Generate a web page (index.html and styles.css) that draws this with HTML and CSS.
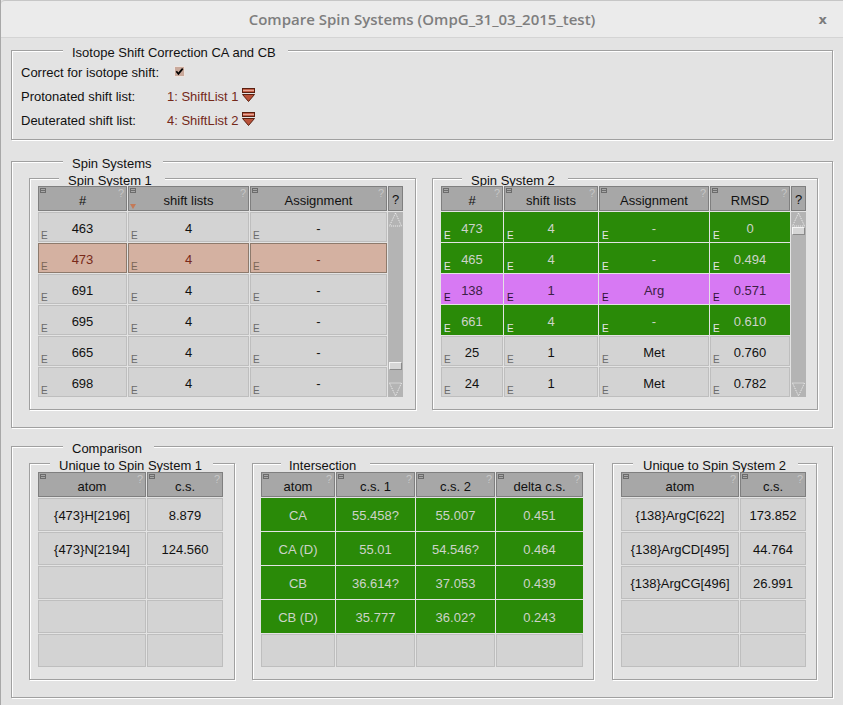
FILE: index.html
```html
<!DOCTYPE html>
<html>
<head>
<meta charset="utf-8">
<link rel="stylesheet" href="styles.css">
</head>
<body>
<div class="window">
  <div class="titlebar">
    <span class="title">Compare Spin Systems (OmpG_31_03_2015_test)</span>
    <span class="close">x</span>
  </div>
  <div class="content">
    <div class="frame f-iso">
      <div class="legend lg-outer lg-tall">Isotope Shift Correction CA and CB</div>
      <div class="iso-grid">
        <span>Correct for isotope shift:</span>
        <span class="chk"><svg width="11" height="11" viewBox="0 0 11 11"><rect x="0.5" y="0.5" width="10" height="10" fill="#c9a99b" stroke="#ece4e0"/><path d="M2.3 5.3 L4.4 7.8 L8.7 2.6" fill="none" stroke="#000" stroke-width="1.7"/></svg></span>
        <span>Protonated shift list:</span>
        <span class="val">1: ShiftList 1<svg class="mb" width="13" height="14" viewBox="0 0 13 14"><rect x="0.5" y="0.5" width="12" height="4" fill="#c2604a" stroke="#5a2010"/><line x1="1" y1="2.5" x2="12" y2="2.5" stroke="#e8a898"/><polygon points="0.5,6.5 12.5,6.5 6.5,13.5" fill="#b9523a" stroke="#5a2010"/></svg></span>
        <span>Deuterated shift list:</span>
        <span class="val">4: ShiftList 2<svg class="mb" width="13" height="14" viewBox="0 0 13 14"><rect x="0.5" y="0.5" width="12" height="4" fill="#c2604a" stroke="#5a2010"/><line x1="1" y1="2.5" x2="12" y2="2.5" stroke="#e8a898"/><polygon points="0.5,6.5 12.5,6.5 6.5,13.5" fill="#b9523a" stroke="#5a2010"/></svg></span>
      </div>
    </div>

    <div class="frame f-spin">
      <div class="legend lg-outer">Spin Systems</div>
      <div class="ss-row">
        <div class="frame ss ss1">
          <div class="legend lg-ss">Spin System 1</div>
          <div class="tbl t-ss1">
            <div class="hd">#<i class="hi"></i><b class="hq">?</b></div>
            <div class="hd">shift lists<i class="hi"></i><b class="hq">?</b><i class="sort"></i></div>
            <div class="hd">Assignment<i class="hi"></i><b class="hq">?</b></div>
            <div class="hd hd-q">?</div>

            <div class="c">463<i class="e">E</i></div><div class="c">4<i class="e">E</i></div><div class="c">-<i class="e">E</i></div>
            <div class="c sel">473<i class="e">E</i></div><div class="c sel">4<i class="e">E</i></div><div class="c sel">-<i class="e">E</i></div>
            <div class="c">691<i class="e">E</i></div><div class="c">4<i class="e">E</i></div><div class="c">-<i class="e">E</i></div>
            <div class="c">695<i class="e">E</i></div><div class="c">4<i class="e">E</i></div><div class="c">-<i class="e">E</i></div>
            <div class="c">665<i class="e">E</i></div><div class="c">4<i class="e">E</i></div><div class="c">-<i class="e">E</i></div>
            <div class="c">698<i class="e">E</i></div><div class="c">4<i class="e">E</i></div><div class="c">-<i class="e">E</i></div>

            <div class="sb">
              <svg class="arr" width="15" height="15" viewBox="0 0 15 15"><polygon points="7.5,1 1.5,14 13.5,14" fill="none" stroke="#f2f2f2" stroke-dasharray="1 1"/></svg>
              <div class="sp"></div>
              <div class="slider sl-bottom"></div>
              <svg class="arr" width="15" height="15" viewBox="0 0 15 15"><polygon points="1.5,1 13.5,1 7.5,14" fill="none" stroke="#f2f2f2" stroke-dasharray="1 1"/></svg>
            </div>
          </div>
        </div>

        <div class="frame ss ss2">
          <div class="legend lg-ss">Spin System 2</div>
          <div class="tbl t-ss2">
            <div class="hd">#<i class="hi"></i><b class="hq">?</b></div>
            <div class="hd">shift lists<i class="hi"></i><b class="hq">?</b></div>
            <div class="hd">Assignment<i class="hi"></i><b class="hq">?</b></div>
            <div class="hd">RMSD<i class="hi"></i><b class="hq">?</b></div>
            <div class="hd hd-q">?</div>

            <div class="c grn">473<i class="e">E</i></div><div class="c grn">4<i class="e">E</i></div><div class="c grn">-<i class="e">E</i></div><div class="c grn">0<i class="e">E</i></div>
            <div class="c grn">465<i class="e">E</i></div><div class="c grn">4<i class="e">E</i></div><div class="c grn">-<i class="e">E</i></div><div class="c grn">0.494<i class="e">E</i></div>
            <div class="c pnk">138<i class="e">E</i></div><div class="c pnk">1<i class="e">E</i></div><div class="c pnk">Arg<i class="e">E</i></div><div class="c pnk">0.571<i class="e">E</i></div>
            <div class="c grn">661<i class="e">E</i></div><div class="c grn">4<i class="e">E</i></div><div class="c grn">-<i class="e">E</i></div><div class="c grn">0.610<i class="e">E</i></div>
            <div class="c">25<i class="e">E</i></div><div class="c">1<i class="e">E</i></div><div class="c">Met<i class="e">E</i></div><div class="c">0.760<i class="e">E</i></div>
            <div class="c">24<i class="e">E</i></div><div class="c">1<i class="e">E</i></div><div class="c">Met<i class="e">E</i></div><div class="c">0.782<i class="e">E</i></div>

            <div class="sb">
              <svg class="arr" width="15" height="15" viewBox="0 0 15 15"><polygon points="7.5,1 1.5,14 13.5,14" fill="none" stroke="#f2f2f2" stroke-dasharray="1 1"/></svg>
              <div class="slider"></div>
              <div class="sp"></div>
              <svg class="arr" width="15" height="15" viewBox="0 0 15 15"><polygon points="1.5,1 13.5,1 7.5,14" fill="none" stroke="#f2f2f2" stroke-dasharray="1 1"/></svg>
            </div>
          </div>
        </div>
      </div>
    </div>

    <div class="frame f-comp">
      <div class="legend lg-outer">Comparison</div>
      <div class="cmp-row">
        <div class="frame sub u1">
          <div class="legend lg-u">Unique to Spin System 1</div>
          <div class="tbl t-u1">
            <div class="hd">atom<i class="hi"></i><b class="hq">?</b></div>
            <div class="hd">c.s.<i class="hi"></i><b class="hq">?</b></div>
            <div class="c">{473}H[2196]</div><div class="c">8.879</div>
            <div class="c">{473}N[2194]</div><div class="c">124.560</div>
            <div class="c"></div><div class="c"></div>
            <div class="c"></div><div class="c"></div>
            <div class="c"></div><div class="c"></div>
          </div>
        </div>

        <div class="frame sub inter">
          <div class="legend lg-i">Intersection</div>
          <div class="tbl t-int">
            <div class="hd">atom<i class="hi"></i><b class="hq">?</b></div>
            <div class="hd">c.s. 1<i class="hi"></i><b class="hq">?</b></div>
            <div class="hd">c.s. 2<i class="hi"></i><b class="hq">?</b></div>
            <div class="hd">delta c.s.<i class="hi"></i><b class="hq">?</b></div>
            <div class="c grn">CA</div><div class="c grn">55.458?</div><div class="c grn">55.007</div><div class="c grn">0.451</div>
            <div class="c grn">CA (D)</div><div class="c grn">55.01</div><div class="c grn">54.546?</div><div class="c grn">0.464</div>
            <div class="c grn">CB</div><div class="c grn">36.614?</div><div class="c grn">37.053</div><div class="c grn">0.439</div>
            <div class="c grn">CB (D)</div><div class="c grn">35.777</div><div class="c grn">36.02?</div><div class="c grn">0.243</div>
            <div class="c"></div><div class="c"></div><div class="c"></div><div class="c"></div>
          </div>
        </div>

        <div class="frame sub u2">
          <div class="legend lg-u2">Unique to Spin System 2</div>
          <div class="tbl t-u2">
            <div class="hd">atom<i class="hi"></i><b class="hq">?</b></div>
            <div class="hd">c.s.<i class="hi"></i><b class="hq">?</b></div>
            <div class="c">{138}ArgC[622]</div><div class="c">173.852</div>
            <div class="c">{138}ArgCD[495]</div><div class="c">44.764</div>
            <div class="c">{138}ArgCG[496]</div><div class="c">26.991</div>
            <div class="c"></div><div class="c"></div>
            <div class="c"></div><div class="c"></div>
          </div>
        </div>
      </div>
    </div>
  </div>
</div>
</body>
</html>
```
FILE: styles.css
```css
html, body {
  margin: 0;
  padding: 0;
}
body {
  background: #e3e3e3;
  font-family: "Liberation Sans", Arial, Helvetica, sans-serif;
  font-size: 13px;
  color: #111;
}
.window {
  width: 843px;
  height: 705px;
  box-sizing: border-box;
  border-left: 1px solid #a8a8a8;
  overflow: hidden;
}
.titlebar {
  height: 38px;
  box-sizing: border-box;
  background: #ebebeb;
  border-top: 1px solid #c6c6c6;
  border-bottom: 1px solid #d4d4d4;
  border-top-left-radius: 4px;
  display: grid;
  grid-template-columns: 1fr auto 1fr;
  align-items: center;
}
.title {
  grid-column: 2;
  font-family: "Open Sans", "DejaVu Sans", sans-serif;
  font-weight: 600;
  font-size: 15px;
  color: #7e7e7e;
}
.close {
  grid-column: 3;
  justify-self: end;
  margin-right: 16px;
  font-family: "DejaVu Sans", sans-serif;
  font-weight: bold;
  font-size: 13px;
  color: #7c7c7c;
}
.content {
  padding: 12px 0 0 10px;
}

/* etched frames */
.frame {
  box-sizing: border-box;
  border: 1px solid #a0a0a0;
  box-shadow: inset 1px 1px 0 #fff, 1px 1px 0 #fff;
}
.legend {
  width: fit-content;
  height: 12px;
  line-height: 14px;
  margin-top: -5px;
  background: #e3e3e3;
  white-space: nowrap;
  padding: 0 12px 0 9px;
}
.lg-tall { height: 14px; }
.f-iso .lg-outer { margin-left: 42px; }
.f-spin .lg-outer, .f-comp .lg-outer { margin-left: 34px; }
.lg-ss { margin-left: 21px; padding-right: 13px; }
.lg-u { margin-left: 12px; padding-right: 11px; }
.lg-u2 { margin-left: 12px; padding: 0 12px 0 10px; }
.lg-i { margin-left: 20px; padding: 0 14px 0 8px; }

.f-iso {
  width: 822px;
  height: 90px;
  padding-left: 9px;
}
.iso-grid {
  display: grid;
  grid-template-columns: 146px auto;
  grid-auto-rows: 24px;
  align-items: center;
}
.chk {
  margin-left: 7px;
  height: 11px;
  display: flex;
  margin-top: -1px;
}
.val {
  color: #74291a;
  display: flex;
  align-items: center;
}
.mb { margin-left: 3px; margin-top: -2px; }

.f-spin {
  width: 822px;
  height: 267px;
  margin-top: 21px;
  padding-left: 17px;
}
.ss-row {
  display: flex;
  gap: 16px;
  margin-top: 9px;
}
.ss {
  height: 232px;
  padding-left: 8px;
}
.ss1 { width: 387px; }
.ss2 { width: 386px; }

.f-comp {
  width: 822px;
  height: 252px;
  margin-top: 18px;
  padding-left: 17px;
}
.cmp-row {
  display: flex;
  margin-top: 9px;
}
.sub {
  height: 217px;
  padding-left: 8px;
}
.sub .tbl { margin-top: 1px; }
.u1 { width: 206px; }
.inter { width: 342px; margin-left: 17px; }
.u2 { width: 205px; margin-left: 18px; }

/* tables */
.tbl {
  display: grid;
  gap: 1px;
}
.t-ss1 {
  grid-template-columns: 89px 121px 137px 15px;
  grid-template-rows: 25px repeat(6, 30px);
}
.t-ss2 {
  grid-template-columns: 62px 94px 110px 80px 15px;
  grid-template-rows: 25px repeat(6, 30px);
}
.t-u1 {
  grid-template-columns: 108px 76px;
  grid-template-rows: 25px repeat(5, 33px);
}
.t-int {
  grid-template-columns: 74px 79px 79px 87px;
  grid-template-rows: 25px repeat(5, 33px);
}
.t-u2 {
  grid-template-columns: 118px 66px;
  grid-template-rows: 25px repeat(5, 33px);
}
.hd {
  position: relative;
  box-sizing: border-box;
  background: #a7a7a7;
  border: 1px solid #7f7f7f;
  display: flex;
  align-items: center;
  justify-content: center;
  padding-top: 3px;
  white-space: nowrap;
}
.hd-q { padding-top: 2px; }
.hi {
  position: absolute;
  left: 1px;
  top: 1px;
  border: 1px solid #6c6c6c;
  box-sizing: border-box;
  background: linear-gradient(#6c6c6c, #6c6c6c) center / 100% 1px no-repeat;
  width: 6px;
  height: 5px;
}
.hq {
  position: absolute;
  right: 2px;
  top: 0;
  font-weight: normal;
  font-size: 11px;
  line-height: 12px;
  color: #c6c6c6;
}
.sort {
  position: absolute;
  left: 1px;
  bottom: 1px;
  width: 0;
  height: 0;
  border-left: 3px solid transparent;
  border-right: 3px solid transparent;
  border-top: 5px solid #c47a58;
}
.c {
  position: relative;
  box-sizing: border-box;
  background: #d3d3d3;
  border: 1px solid #bebebe;
  display: flex;
  align-items: center;
  justify-content: center;
  padding-top: 2px;
  white-space: nowrap;
}
.e {
  position: absolute;
  left: 2px;
  bottom: 0;
  font-style: normal;
  font-size: 10px;
  line-height: 10px;
  color: #6a6a6a;
}
.sel {
  background: #d4b1a1;
  border-color: #8d7a6c;
  color: #78291a;
}
.sel .e { color: #7a6656; }
.grn {
  background: #2a8a08;
  border-color: #2a8a08;
  color: #cdd3c9;
}
.grn .e { color: #e6e6e6; }
.pnk {
  background: #d779f3;
  border-color: #d779f3;
  color: #3c2145;
}
.pnk .e { color: #2a0f30; }

/* scrollbar */
.sb {
  grid-column: -2;
  grid-row: 2 / span 6;
  background: #b4b4b4;
  display: flex;
  flex-direction: column;
}
.arr { display: block; flex: none; }
.sp { flex: 1; }
.slider {
  flex: none;
  height: 8px;
  margin: 0 1px;
  box-sizing: border-box;
  background: #d6d6d6;
  border: 1px solid #8a8a8a;
  border-top-color: #f4f4f4;
  border-left-color: #f4f4f4;
}
.sl-bottom { margin-bottom: 12px; }
```
